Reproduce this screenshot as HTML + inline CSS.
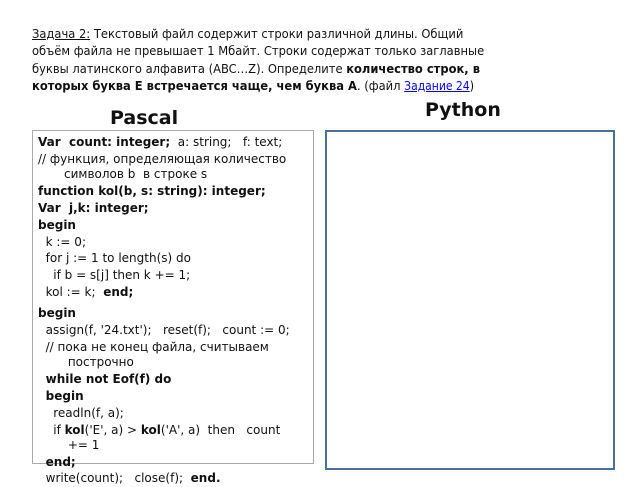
<!DOCTYPE html>
<html><head><meta charset="utf-8"><style>
body{margin:0;width:640px;height:480px;background:#fff;position:relative;overflow:hidden;font-family:"DejaVu Sans","Liberation Sans",sans-serif;color:#111}
.t{position:absolute;left:32px;top:26px;font-size:12.8px;line-height:17.3px;white-space:nowrap;font-family:"DejaVu Sans Condensed","Liberation Sans",sans-serif}
.h{position:absolute;font-weight:bold;font-size:19px}
.pb{position:absolute;left:32px;top:130px;width:282px;height:334px;border:1px solid #aaa;box-sizing:border-box}
.py{position:absolute;left:325px;top:130px;width:290px;height:340px;border:2px solid #4a6f9c;box-sizing:border-box}
.c{position:absolute;left:38px;top:134px;font-size:12px;line-height:16.9px;width:275px}
.c div{white-space:nowrap}
.in{padding-left:26px}
</style></head><body>
<div class="t"><u>Задача 2:</u> Текстовый файл содержит строки различной длины. Общий<br>объём файла не превышает 1 Мбайт. Строки содержат только заглавные<br>буквы латинского алфавита (ABC…Z). Определите <b>количество строк, в</b><br><b>которых буква E встречается чаще, чем буква A</b>. (файл <u style="color:#00f;font-size:12px">Задание 24</u>)</div>
<div class="h" style="left:110px;top:107px">Pascal</div>
<div class="h" style="left:425px;top:99px">Python</div>
<div class="pb"></div>
<div class="py"></div>
<div class="c">
<div><b>Var&nbsp; count: integer;</b>&nbsp; a: string;&nbsp;&nbsp; f: text;</div>
<div>// функция, определяющая количество</div>
<div class="in" style="line-height:14px;margin-top:-1px">символов b&nbsp; в строке s</div>
<div style="margin-top:2px"><b>function kol(b, s: string): integer;</b></div>
<div><b>Var&nbsp; j,k: integer;</b></div>
<div><b>begin</b></div>
<div>&nbsp; k := 0;</div>
<div>&nbsp; for j := 1 to length(s) do</div>
<div>&nbsp;&nbsp;&nbsp; if b = s[j] then k += 1;</div>
<div>&nbsp; kol := k;&nbsp; <b>end;</b></div>
<div style="margin-top:4px"><b>begin</b></div>
<div>&nbsp; assign(f, '24.txt');&nbsp;&nbsp; reset(f);&nbsp;&nbsp; count := 0;</div>
<div>&nbsp; // пока не конец файла, считываем</div>
<div class="in" style="line-height:14px;margin-top:-1px">&nbsp;построчно</div>
<div style="margin-top:2px">&nbsp; <b>while not Eof(f) do</b></div>
<div>&nbsp; <b>begin</b></div>
<div>&nbsp;&nbsp;&nbsp; readln(f, a);</div>
<div>&nbsp;&nbsp;&nbsp; if <b>kol</b>('E', a) &gt; <b>kol</b>('A', a)&nbsp; then&nbsp;&nbsp; count</div>
<div class="in" style="line-height:14px;margin-top:-1px">&nbsp;+= 1</div>
<div style="margin-top:2px">&nbsp; <b>end;</b></div>
<div>&nbsp; write(count);&nbsp;&nbsp; close(f);&nbsp; <b>end.</b></div>
</div>
</body></html>
